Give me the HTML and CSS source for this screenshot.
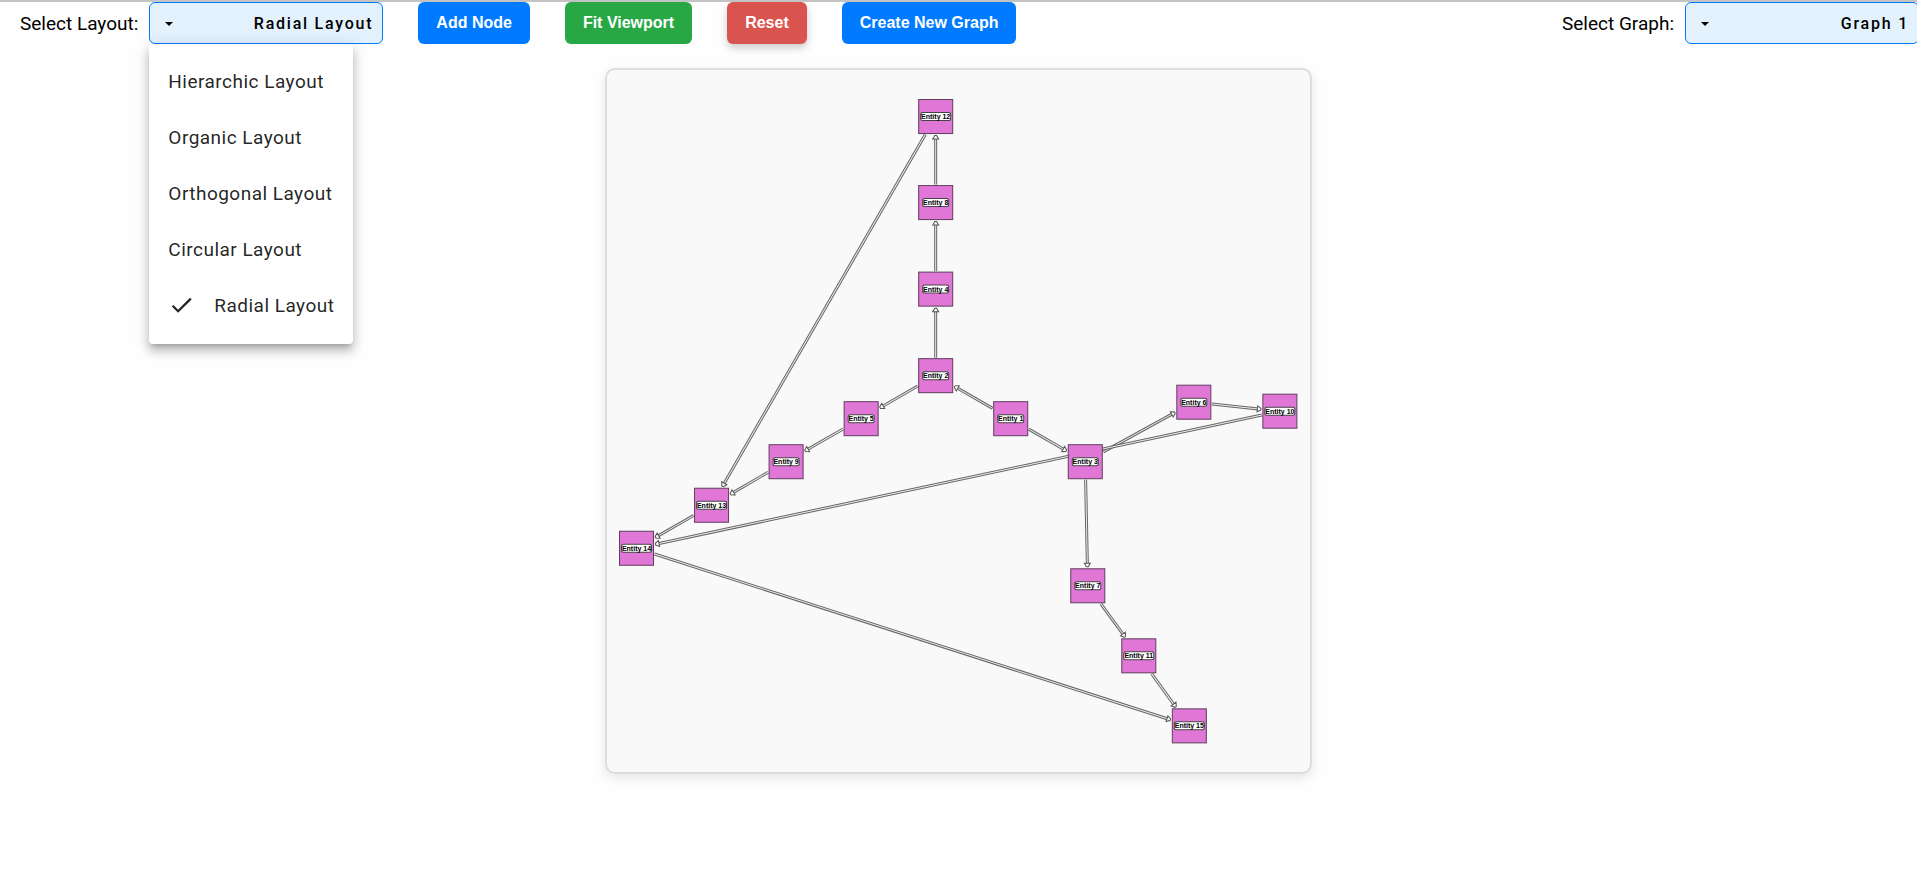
FILE: index.html
```html
<!DOCTYPE html>
<html lang="en">
<head>
<meta charset="utf-8">
<title>Graph Layouts</title>
<link rel="stylesheet" href="styles.css">
</head>
<body>
<header class="toolbar">
  <div class="field">
    <label class="field-label" for="layout">Select Layout:</label>
    <div class="picker">
      <select class="select" id="layout">
        <option>Hierarchic Layout</option>
        <option>Organic Layout</option>
        <option>Orthogonal Layout</option>
        <option>Circular Layout</option>
        <option selected>Radial Layout</option>
      </select>
      <svg class="caret" viewBox="0 0 8 4" aria-hidden="true"><path d="M0 0h8L4 4z"/></svg>
      <ul class="menu" role="listbox" aria-label="Layouts">
        <li class="menu-item" role="option">Hierarchic Layout</li>
        <li class="menu-item" role="option">Organic Layout</li>
        <li class="menu-item" role="option">Orthogonal Layout</li>
        <li class="menu-item" role="option">Circular Layout</li>
        <li class="menu-item" role="option" aria-selected="true">
          <svg class="check" viewBox="0 0 24 24" aria-hidden="true"><path d="M9 16.17L4.83 12l-1.42 1.41L9 19 21 7l-1.41-1.41z"/></svg>
          Radial Layout
        </li>
      </ul>
    </div>
  </div>
  <div class="actions">
    <button class="button" type="button">Add Node</button>
    <button class="button button-success" type="button">Fit Viewport</button>
    <button class="button button-danger" type="button">Reset</button>
    <button class="button" type="button">Create New Graph</button>
  </div>
  <div class="field field-end">
    <label class="field-label" for="graph">Select Graph:</label>
    <div class="picker">
      <select class="select" id="graph"><option>Graph 1</option></select>
      <svg class="caret" viewBox="0 0 8 4" aria-hidden="true"><path d="M0 0h8L4 4z"/></svg>
    </div>
  </div>
</header>
<main class="stage">
  <svg class="graph" id="canvas" viewBox="0 0 702 702" role="img" aria-label="Entity graph">
    <defs>
      <marker id="arrow" viewBox="0 0 6 8" refX="5" refY="4" markerWidth="6" markerHeight="8" markerUnits="userSpaceOnUse" orient="auto">
        <path class="arrow" d="M1.5 1L5 3.2V4.8L1.5 7z"/>
      </marker>
    </defs>
  </svg>
</main>
<script src="graph.js"></script>
</body>
</html>
```
FILE: styles.css
```css
* { box-sizing: border-box; }

body {
  margin: 0;
  border-top: 2px solid #c4c4c4;
  background: #fefefe;
  color: #000;
  font-family: Roboto, "Liberation Sans", sans-serif;
  overflow: hidden;
}

.toolbar {
  display: flex;
  align-items: center;
  gap: 35px;
  padding-left: 20px;
}

.field {
  display: flex;
  align-items: center;
  gap: 11px;
}

.field-end {
  margin-left: auto;
  margin-right: -2px;
}

.field-label { font-size: 19px; }

.picker { position: relative; }

.select {
  display: block;
  width: 234px;
  height: 42px;
  padding: 0 9px 0 40px;
  border: 1px solid #007bff;
  border-radius: 6px;
  background: #e3f1fd;
  color: #000;
  font: 500 16px Roboto, sans-serif;
  letter-spacing: .11em;
  text-align: right;
  text-align-last: right;
  appearance: none;
}

.caret {
  position: absolute;
  left: 16px;
  top: 20px;
  width: 8px;
  height: 4px;
  pointer-events: none;
}

.menu {
  position: absolute;
  top: 100%;
  left: 0;
  z-index: 1;
  width: 204px;
  margin: 0;
  padding: 9px 0 11px;
  border-radius: 4px;
  background: #fff;
  box-shadow: 0 5px 5px -3px rgba(0, 0, 0, .2), 0 8px 10px 1px rgba(0, 0, 0, .14), 0 3px 14px 2px rgba(0, 0, 0, .12);
  list-style: none;
}

.menu-item {
  display: flex;
  align-items: center;
  height: 56px;
  padding: 0 19px;
  color: rgba(0, 0, 0, .87);
  font-size: 19px;
  letter-spacing: .025em;
  white-space: nowrap;
}

.check {
  width: 28px;
  height: 28px;
  margin-right: 19px;
  fill: #222;
}

.actions {
  display: flex;
  gap: 35px;
}

.button {
  height: 42px;
  padding: 0 18px;
  border: 0;
  border-radius: 6px;
  background: #007bff;
  color: #fff;
  font: bold 16px "Liberation Sans", Arial, sans-serif;
}

.button-success { background: #28a745; }

.button-danger {
  background: #d9534f;
  box-shadow: 0 4px 8px rgba(0, 0, 0, .2);
}

.stage {
  display: flex;
  justify-content: center;
  padding: 24px 0;
}

.graph {
  box-sizing: content-box;
  width: 80vh;
  height: 80vh;
  border: 2px solid #ddd;
  border-radius: 10px;
  background: #f9f9f9;
  box-shadow: 0 4px 12px rgba(0, 0, 0, .1);
}

.edge-outline { stroke: #666; stroke-width: 3; }
.edge-core { stroke: #eee; stroke-width: 1; }
.arrow { fill: #fff; stroke: #555; stroke-width: 1; }
.node { fill: #e077d6; stroke: #5f3e5f; stroke-width: 1; }
.tag { fill: #fff; stroke: #444; stroke-width: 1; }

.tag-text {
  fill: #000;
  font: bold 7px "Liberation Sans", Arial, sans-serif;
  text-anchor: middle;
}
```
FILE: graph.js
```js
const nodes = {
  1: [403.5, 348.5], 2: [328.5, 305.5], 3: [478, 391.5], 4: [328.5, 219],
  5: [254, 348.5], 6: [586.5, 332], 7: [480.5, 515.5], 8: [328.5, 132.5],
  9: [179, 391.5], 10: [672.5, 341], 11: [531.5, 585.5], 12: [328.5, 46.5],
  13: [104.5, 435], 14: [29.5, 478], 15: [582, 655.5]
};
const edges = [
  [1, 2], [1, 3], [2, 4], [2, 5], [3, 6], [3, 7], [4, 8], [5, 9],
  [6, 10], [7, 11], [8, 12], [9, 13], [10, 14], [11, 15], [12, 13],
  [13, 14], [14, 15]
];
const half = 17;
const canvas = document.getElementById("canvas");

function add(name, attrs) {
  const el = document.createElementNS("http://www.w3.org/2000/svg", name);
  for (const key in attrs) el.setAttribute(key, attrs[key]);
  canvas.appendChild(el);
  return el;
}

// Point where the line from a to b leaves the box around a, plus a gap.
function exit(a, b, gap) {
  const dx = b[0] - a[0], dy = b[1] - a[1];
  const t = (half + gap) / Math.max(Math.abs(dx), Math.abs(dy));
  return [a[0] + dx * t, a[1] + dy * t];
}

for (const [from, to] of edges) {
  const [x1, y1] = exit(nodes[from], nodes[to], 1);
  const [x2, y2] = exit(nodes[to], nodes[from], 2);
  const line = { x1, y1, x2, y2 };
  add("line", { ...line, class: "edge-outline" });
  add("line", { ...line, class: "edge-core", "marker-end": "url(#arrow)" });
}

for (const id in nodes) {
  const [x, y] = nodes[id];
  const w = id > 9 ? 30 : 26;
  add("rect", { class: "node", x: x - half, y: y - half, width: half * 2, height: half * 2 });
  add("rect", { class: "tag", x: x - w / 2, y: y - 4, width: w, height: 8, rx: 2 });
  add("text", { class: "tag-text", x, y: y + 2.5 }).textContent = "Entity " + id;
}
```
